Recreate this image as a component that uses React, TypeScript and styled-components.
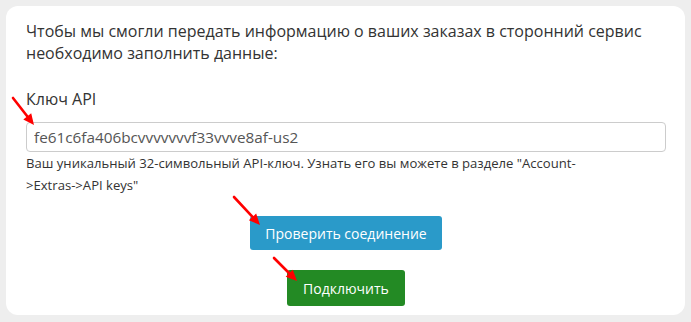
import * as React from "react";
import styled, { createGlobalStyle } from "styled-components";

const GlobalStyle = createGlobalStyle`
  html, body {
    margin: 0;
    padding: 0;
    background: #eeeeee;
    font-family: "Open Sans", "Liberation Sans", sans-serif;
  }
`;

const Page = styled.div`
  position: relative;
  width: 691px;
  height: 322px;
  padding: 6px;
  box-sizing: border-box;
`;

const Card = styled.div`
  background: #ffffff;
  border-radius: 12px;
  width: 679px;
  height: 309px;
  box-sizing: border-box;
  padding: 14px 20px 9px 20px;
  display: flex;
  flex-direction: column;
`;

const Intro = styled.p`
  margin: 0;
  font-size: 16px;
  line-height: 22px;
  color: #333333;
`;

const Label = styled.label`
  display: block;
  margin-top: 24px;
  font-size: 16px;
  line-height: 22px;
  color: #333333;
`;

const KeyInput = styled.input`
  margin-top: 12px;
  width: 640px;
  height: 30px;
  box-sizing: border-box;
  padding: 0 7px;
  border: 1px solid #cccccc;
  border-radius: 4px;
  font-family: "Open Sans", "Liberation Sans", sans-serif;
  font-size: 15.3px;
  color: #555555;
  outline: none;
`;

const Help = styled.div`
  max-width: 584px;
  font-size: 13.1px;
  line-height: 22px;
  color: #333333;
`;

const Actions = styled.div`
  display: flex;
  flex-direction: column;
  align-items: center;
  gap: 20px;
  margin-top: 20px;
  width: 640px;
`;

const Button = styled.button<{ $tone: "info" | "success" }>`
  border: none;
  border-radius: 3px;
  color: #ffffff;
  font-family: "Open Sans", "Liberation Sans", sans-serif;
  font-size: 14px;
  height: ${(p) => (p.$tone === "info" ? "34px" : "36px")};
  padding: 0 ${(p) => (p.$tone === "info" ? "15px" : "16px")};
  background: ${(p) => (p.$tone === "info" ? "#2a9ac9" : "#238a24")};
  cursor: pointer;
`;

const Overlay = styled.svg`
  position: absolute;
  left: 0;
  top: 0;
  pointer-events: none;
`;

type ArrowProps = { x1: number; y1: number; x2: number; y2: number };

const Arrow = ({ x1, y1, x2, y2 }: ArrowProps) => {
  const a = Math.atan2(y2 - y1, x2 - x1);
  const len = 11;
  const half = 5;
  const bx = x2 - len * Math.cos(a);
  const by = y2 - len * Math.sin(a);
  const px = -Math.sin(a) * half;
  const py = Math.cos(a) * half;
  return (
    <g>
      <line x1={x1} y1={y1} x2={bx} y2={by} stroke="#ff0000" strokeWidth={2.6} strokeLinecap="round" />
      <polygon points={`${x2},${y2} ${bx + px},${by + py} ${bx - px},${by - py}`} fill="#ff0000" />
    </g>
  );
};

export default function App() {
  return (
    <>
      <GlobalStyle />
      <Page>
        <Card>
          <Intro>
            Чтобы мы смогли передать информацию о ваших заказах в сторонний сервис необходимо заполнить данные:
          </Intro>
          <Label htmlFor="api-key">Ключ API</Label>
          <KeyInput id="api-key" type="text" defaultValue="fe61c6fa406bcvvvvvvvf33vvve8af-us2" />
          <Help>
            Ваш уникальный 32-символьный API-ключ. Узнать его вы можете в разделе "Account-&gt;Extras-&gt;API keys"
          </Help>
          <Actions>
            <Button $tone="info">Проверить соединение</Button>
            <Button $tone="success">Подключить</Button>
          </Actions>
        </Card>
        <Overlay width={691} height={322}>
          <Arrow x1={13} y1={98} x2={34} y2={125} />
          <Arrow x1={234} y1={197} x2={260} y2={225} />
          <Arrow x1={274} y1={258} x2={297} y2={281} />
        </Overlay>
      </Page>
    </>
  );
}
